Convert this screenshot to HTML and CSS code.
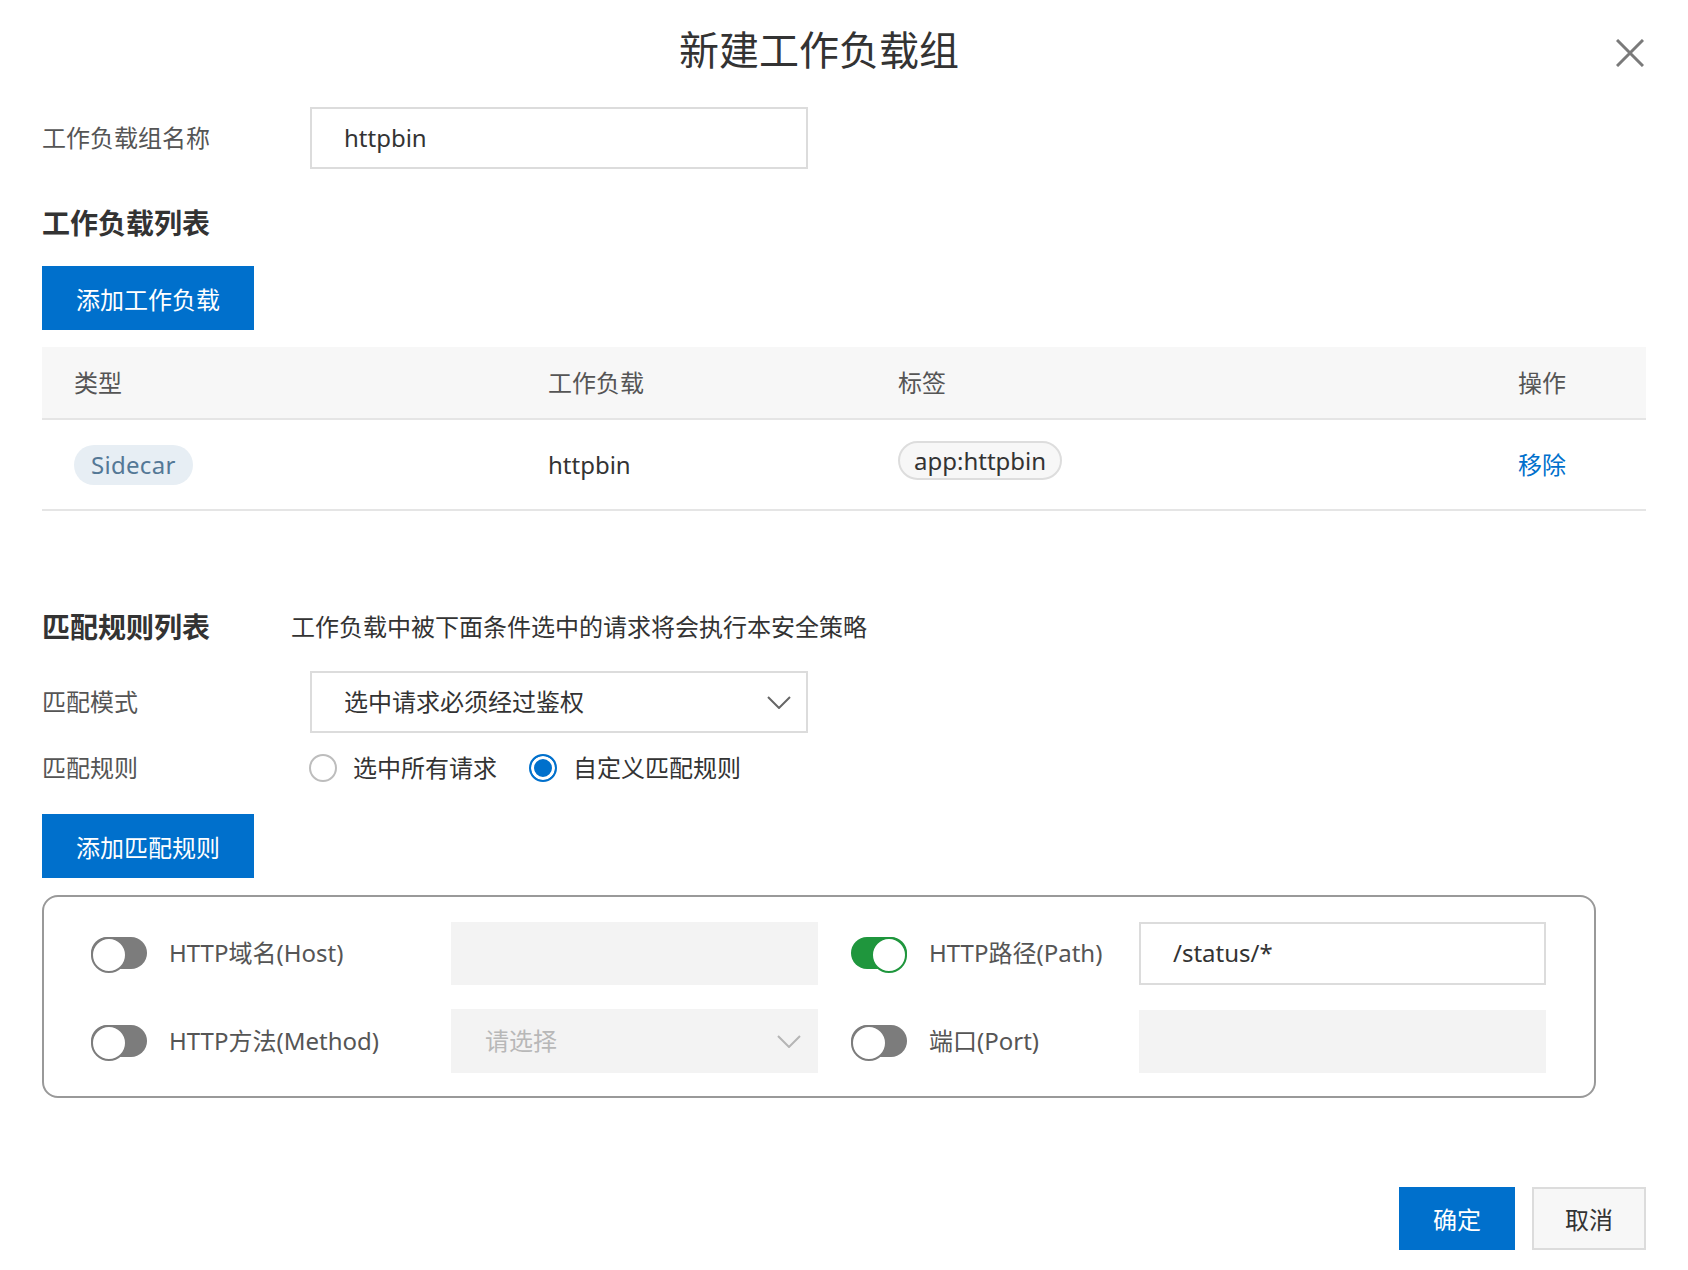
FILE: index.html
```html
<!DOCTYPE html>
<html lang="zh-CN">
<head>
<meta charset="utf-8">
<title>新建工作负载组</title>
<link rel="stylesheet" href="styles.css">
</head>
<body>
<div class="dialog">
  <div class="header">
    <h1 class="title">新建工作负载组</h1>
    <button class="close" aria-label="关闭">
      <svg width="28" height="28" viewBox="0 0 28 28"><path d="M1 1 L27 27 M27 1 L1 27" stroke="#7a7a7a" stroke-width="3" fill="none"/></svg>
    </button>
  </div>

  <div class="form-row name-row">
    <label class="label">工作负载组名称</label>
    <div class="input">httpbin</div>
  </div>

  <h2 class="section-title wl-title">工作负载列表</h2>
  <button class="btn primary add-wl">添加工作负载</button>

  <div class="table">
    <div class="tr th">
      <div class="cell">类型</div>
      <div class="cell">工作负载</div>
      <div class="cell">标签</div>
      <div class="cell">操作</div>
    </div>
    <div class="tr td">
      <div class="cell"><span class="tag-type">Sidecar</span></div>
      <div class="cell">httpbin</div>
      <div class="cell"><span class="tag-label">app:httpbin</span></div>
      <div class="cell"><a class="link">移除</a></div>
    </div>
  </div>

  <div class="match-head">
    <h2 class="section-title match-title">匹配规则列表</h2>
    <p class="desc">工作负载中被下面条件选中的请求将会执行本安全策略</p>
  </div>

  <div class="form-row mode-row">
    <label class="label">匹配模式</label>
    <div class="input select">
      <span>选中请求必须经过鉴权</span>
      <svg class="chev" width="24" height="13" viewBox="0 0 24 13"><path d="M1 1 L12 12 L23 1" stroke="#666" stroke-width="2" fill="none"/></svg>
    </div>
  </div>

  <div class="form-row radio-row">
    <label class="label">匹配规则</label>
    <div class="radios">
      <span class="radio"></span><span class="radio-text">选中所有请求</span>
      <span class="radio checked"></span><span class="radio-text">自定义匹配规则</span>
    </div>
  </div>

  <button class="btn primary add-rule">添加匹配规则</button>

  <div class="rule-box">
    <span class="switch"></span>
    <span class="rule-label">HTTP域名(Host)</span>
    <div class="field disabled"></div>
    <span class="switch on"></span>
    <span class="rule-label">HTTP路径(Path)</span>
    <div class="field">/status/*</div>

    <span class="switch"></span>
    <span class="rule-label">HTTP方法(Method)</span>
    <div class="field disabled dsel">
      <span class="placeholder">请选择</span>
      <svg class="chev" width="24" height="13" viewBox="0 0 24 13"><path d="M1 1 L12 12 L23 1" stroke="#b5b5b5" stroke-width="2" fill="none"/></svg>
    </div>
    <span class="switch"></span>
    <span class="rule-label">端口(Port)</span>
    <div class="field disabled"></div>
  </div>

  <div class="footer">
    <button class="btn primary ok">确定</button>
    <button class="btn cancel">取消</button>
  </div>
</div>
</body>
</html>
```

FILE: styles.css
```css
* { box-sizing: border-box; }
html, body { margin: 0; padding: 0; background: #fff; }
body {
  font-family: "Noto Sans", "Noto Sans CJK SC", sans-serif;
  font-size: 24px;
  line-height: 1.3;
  color: #333;
}
.dialog { padding: 0 42px; width: 1688px; }

.header { display: flex; align-items: center; height: 100px; }
.title {
  flex: 1; margin: 0; text-align: center;
  font-size: 40px; font-weight: normal; color: #333; line-height: 100px;
}
.close {
  width: 50px; height: 50px; padding: 0; border: 0; background: none;
  display: flex; align-items: center; justify-content: flex-end;
  margin-top: 5px;
}
.close svg { margin-right: 2px; }

.form-row { display: flex; align-items: center; }
.label { width: 268px; color: #555; flex: none; }
.input {
  width: 498px; height: 62px; border: 2px solid #dcdcdc; background: #fff;
  padding: 0 32px; display: flex; align-items: center; color: #333;
}
.name-row { margin-top: 7px; }

.section-title { margin: 0; font-size: 28px; font-weight: bold; line-height: 40px; color: #333; }
.wl-title { margin-top: 34px; }

.btn {
  font-family: inherit; font-size: 24px; border: 0; cursor: pointer;
  height: 64px; display: flex; align-items: center; justify-content: center;
}
.primary { background: #0070cc; color: #fff; }
.add-wl, .add-rule { width: 212px; }
.add-wl { margin-top: 23px; }

.table { margin-top: 17px; width: 1604px; }
.tr { display: grid; grid-template-columns: 474px 350px 620px 160px; align-items: center; }
.th { height: 73px; background: #f7f7f7; border-bottom: 2px solid #e5e5e5; color: #555; }
.td { height: 91px; border-bottom: 2px solid #e5e5e5; color: #333; }
.cell { padding-left: 32px; display: flex; align-items: center; }
.tag-type {
  display: inline-flex; align-items: center; height: 40px; padding: 0 17px;
  border-radius: 20px; background: #e7eef4; color: #547896; letter-spacing: 0.3px;
}
.tag-label {
  display: inline-flex; align-items: center; height: 39px; padding: 0 14px;
  border-radius: 20px; background: #f7f7f7; border: 2px solid #dddddd; color: #333;
  margin-top: -8px;
}
.link { color: #0070cc; }

.match-head { display: flex; align-items: center; margin-top: 96px; }
.match-title { width: 249px; flex: none; }
.desc { margin: 0; line-height: 40px; color: #333; }

.mode-row { margin-top: 24px; }
.select { justify-content: space-between; padding-right: 15px; }

.radio-row { margin-top: 15px; height: 40px; }
.radios { display: flex; align-items: center; }
.radio {
  width: 28px; height: 28px; border-radius: 50%; border: 2px solid #bdbdbd;
  margin-left: -1px; flex: none; background: #fff;
}
.radio.checked {
  border-color: #0070cc; background: #0070cc; box-shadow: inset 0 0 0 3px #fff;
  margin-left: 32px;
}
.radio-text { margin-left: 16px; color: #333; }
.radio.checked + .radio-text { margin-left: 16px; }

.add-rule { margin-top: 26px; }

.rule-box {
  margin-top: 17px; width: 1554px; border: 2px solid #999; border-radius: 16px;
  padding: 24px 45px 23px 47px;
  display: grid;
  grid-template-columns: 56px 260px 367px 67px 188px 407px;
  grid-template-rows: 64px 64px;
  column-gap: 22px; row-gap: 24px;
  align-items: center;
}
.switch {
  width: 56px; height: 32px; border-radius: 16px; background: #7c7c7c;
  position: relative; justify-self: end;
}
.switch::after {
  content: ""; position: absolute; left: 0; top: 0;
  width: 32px; height: 32px; border-radius: 50%;
  background: #fff; border: 2px solid #7c7c7c;
}
.switch.on { background: #1f963d; }
.switch.on::after { left: auto; right: 0; border-color: #1f963d; }
.rule-label { color: #555; white-space: nowrap; }
.field {
  height: 63px; border: 2px solid #dcdcdc; background: #fff;
  padding: 0 32px; display: flex; align-items: center; color: #333;
}
.field.disabled { background: #f3f3f3; border-color: #f3f3f3; }
.dsel { justify-content: space-between; padding-right: 15px; height: 64px; }
.placeholder { color: #b8b8b8; }

.footer { display: flex; justify-content: flex-end; gap: 17px; margin-top: 89px; }
.ok { width: 116px; height: 63px; }
.cancel { width: 114px; height: 63px; background: #f7f7f7; border: 2px solid #dcdcdc; color: #333; }
```
